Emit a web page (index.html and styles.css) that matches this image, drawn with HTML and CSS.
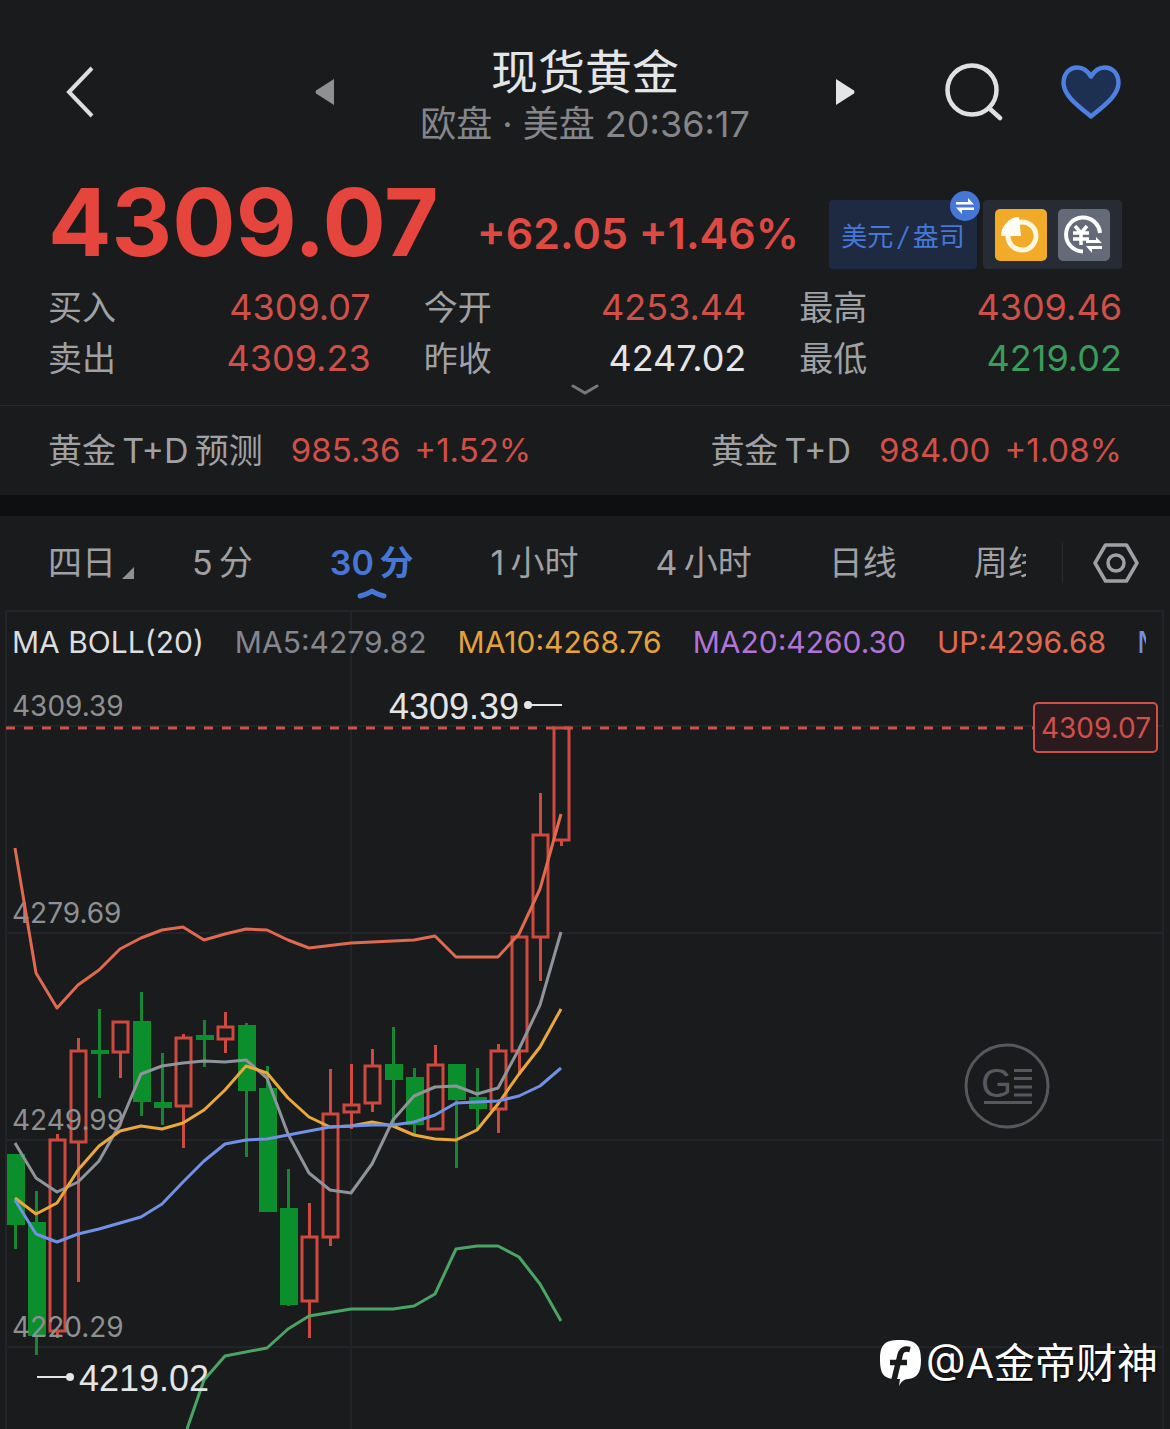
FILE: index.html
```html
<!DOCTYPE html>
<html lang="zh-CN">
<head>
    <meta charset="UTF-8">
    <meta name="viewport" content="width=device-width, initial-scale=1.0">
    <title>现货黄金</title>
    <link rel="stylesheet" href="styles.css">
</head>
<body>
    <header class="header">
        <button class="icon-btn" type="button" aria-label="返回">
            <svg width="28" height="52" viewBox="0 0 28 52"><path d="M26 2 3 26l23 24" fill="none" stroke="#dcdddf" stroke-width="4"/></svg>
        </button>
        <div class="switcher">
            <button class="icon-btn" type="button" aria-label="上一个">
                <svg width="20" height="28" viewBox="0 0 20 28"><path d="M19 1v26L1 15.500Q0 14 1 12.500Z" fill="#8f9092"/></svg>
            </button>
            <div class="title">
                <h1>现货黄金</h1>
                <p>欧盘 · 美盘 20:36:17</p>
            </div>
            <button class="icon-btn" type="button" aria-label="下一个">
                <svg width="20" height="28" viewBox="0 0 20 28"><path d="M1 1v26L19 15.500Q20 14 19 12.500Z" fill="#e4e5e7"/></svg>
            </button>
        </div>
        <div class="header-actions">
            <button class="icon-btn" type="button" aria-label="搜索">
                <svg width="58" height="58" viewBox="0 0 58 58" fill="none" stroke="#dfe0e2" stroke-width="4.500"><circle cx="27" cy="27" r="24.500"/><path d="m44 45 11 10" stroke-linecap="round"/></svg>
            </button>
            <button class="icon-btn" type="button" aria-label="自选">
                <svg width="60" height="54" viewBox="0 0 60 54"><path d="M30 11.500C25.500 4 20.500 2.500 16.500 2.500 8 2.500 2.500 9 2.500 18c0 12 13.500 22 27.500 33.500C44 40 57.500 30 57.500 18c0-9-5.500-15.500-14-15.500-4 0-9 1.500-13.500 9Z" fill="#1e3052" stroke="#4d80e0" stroke-width="4.500" stroke-linejoin="round"/></svg>
            </button>
        </div>
    </header>

    <section class="quote">
        <div class="price-row">
            <strong class="price">4309.07</strong>
            <span class="change">+62.05 +1.46%</span>
            <button class="unit" type="button">美元<i>/</i>盎司
                <svg class="unit-badge" width="30" height="30" viewBox="0 0 30 30"><circle cx="15" cy="15" r="15" fill="#4677d6"/><path d="M6 11h12V7l6 6.500H6zM24 19H12v4l-6-6.500h18z" fill="#fff"/></svg>
            </button>
            <div class="tools">
                <button class="icon-btn" type="button" aria-label="分析">
                    <svg width="52" height="52" viewBox="0 0 52 52"><rect width="52" height="52" rx="5" fill="#f1ab28"/><circle cx="27" cy="27" r="14" fill="none" stroke="#fff8de" stroke-width="5"/><path d="M26 27H6A19 19 0 0 1 24 8Z" fill="#fffdf5"/></svg>
                </button>
                <button class="icon-btn" type="button" aria-label="换算">
                    <svg width="52" height="52" viewBox="0 0 52 52"><rect width="52" height="52" rx="5" fill="#656a78"/><g fill="none" stroke="#fff"><path d="M25 42.500A17 17 0 1 1 42 24" stroke-width="4"/><path d="m17 17 6 7 6-7M23 24v12M15 24h16M15 30h16" stroke-width="3.500"/></g><path d="M28 34h16l-6-6v3H28zM44 37H28l6 7v-4h10z" fill="#fff"/></svg>
                </button>
            </div>
        </div>

        <dl class="stats">
            <div><dt>买入</dt><dd class="up">4309.07</dd></div>
            <div><dt>今开</dt><dd class="up">4253.44</dd></div>
            <div><dt>最高</dt><dd class="up">4309.46</dd></div>
            <div><dt>卖出</dt><dd class="up">4309.23</dd></div>
            <div><dt>昨收</dt><dd>4247.02</dd></div>
            <div><dt>最低</dt><dd class="down">4219.02</dd></div>
        </dl>
        <button class="icon-btn more" type="button" aria-label="展开">
            <svg width="28" height="12" viewBox="0 0 28 12"><path d="m2 2 12 7 12-7" fill="none" stroke="#77787b" stroke-width="3" stroke-linecap="round"/></svg>
        </button>
    </section>

    <section class="related">
        <a href="#td-forecast"><span>黄金&thinsp;T+D&thinsp;预测</span><b>985.36</b><b>+1.52%</b></a>
        <a href="#td"><span>黄金&thinsp;T+D</span><b>984.00</b><b>+1.08%</b></a>
    </section>

    <div class="toolbar">
        <nav class="tabs">
            <a href="#d4" class="tab-menu">四日<svg width="12" height="12" viewBox="0 0 12 12"><path d="M12 0v12H0z" fill="#8f9092"/></svg></a>
            <a href="#m5">5&thinsp;分</a>
            <a href="#m30" class="active">30&thinsp;分
                <svg class="tab-mark" width="30" height="11" viewBox="0 0 30 11"><path d="M3 8q8-2 12-5 4 3 12 5" fill="none" stroke="#4677d6" stroke-width="5" stroke-linecap="round" stroke-linejoin="round"/></svg>
            </a>
            <a href="#h1">1&thinsp;小时</a>
            <a href="#h4">4&thinsp;小时</a>
            <a href="#day">日线</a>
            <a href="#week">周线</a>
        </nav>
        <button class="icon-btn settings" type="button" aria-label="设置">
            <svg width="46" height="40" viewBox="0 0 46 40" fill="none" stroke="#a0a1a4" stroke-width="3.500"><path d="M12.500 2h21L44 20 33.500 38h-21L2 20Z" stroke-linejoin="round"/><circle cx="23" cy="20" r="8"/></svg>
        </button>
    </div>

    <main class="chart">
        <div class="legend">
            <span class="c-main">MA BOLL(20)</span>
            <span class="c-ma5">MA5:4279.82</span>
            <span class="c-ma10">MA10:4268.76</span>
            <span class="c-ma20">MA20:4260.30</span>
            <span class="c-up">UP:4296.68</span>
            <span class="c-mid">MID:4260.30</span>
        </div>
        <svg class="plot" viewBox="0 610 1170 819" role="img" aria-label="30 分 K 线图">
            <path class="grid" d="M6 611H1163M6 726H1163M6 933H1163M6 1140H1163M6 1347H1163M6 611V1429M351 611V1429M1163 611V1429"/>

            <!-- falling candles -->
            <g class="fall">
                <path d="M15.500 1154V1249M36.500 1191V1355M99.500 1009V1098M141.500 992V1116M162.500 1053V1125M204.500 1020V1067M246.500 1023V1157M267.500 1066V1212M288.500 1169V1306M393.500 1027V1125M414.500 1068V1135M456.500 1064V1168M477.500 1068V1129"/>
                <rect x="7" y="1154" width="18" height="71"/>
                <rect x="28" y="1222" width="18" height="114"/>
                <rect x="91" y="1050" width="18" height="4"/>
                <rect x="133" y="1021" width="18" height="81"/>
                <rect x="154" y="1102" width="18" height="6"/>
                <rect x="196" y="1035" width="18" height="5"/>
                <rect x="238" y="1025" width="18" height="66"/>
                <rect x="259" y="1088" width="18" height="124"/>
                <rect x="280" y="1208" width="18" height="97"/>
                <rect x="385" y="1064" width="18" height="16"/>
                <rect x="406" y="1077" width="18" height="48"/>
                <rect x="448" y="1064" width="18" height="36"/>
                <rect x="469" y="1097" width="18" height="12"/>
            </g>

            <!-- rising candles -->
            <g class="rise">
                <path d="M57.500 1134V1140M57.500 1332V1338M78.500 1038V1050M78.500 1143V1282M120.500 1052V1078M183.500 1034V1037M183.500 1106V1148M225.500 1012V1026M225.500 1039V1053M309.500 1203V1236M309.500 1301V1338M330.500 1069V1113M330.500 1237V1246M351.500 1064V1104M351.500 1112V1129M372.500 1049V1065M372.500 1104V1112M435.500 1045V1065M498.500 1044V1050M498.500 1109V1133M519.500 1051V1075M540.500 793V834M540.500 937V981M561.500 840V846"/>
                <rect x="50" y="1140" width="15" height="191"/>
                <rect x="71" y="1051" width="15" height="91"/>
                <rect x="113" y="1022" width="15" height="30"/>
                <rect x="176" y="1038" width="15" height="68"/>
                <rect x="218" y="1027" width="15" height="12"/>
                <rect x="302" y="1237" width="15" height="64"/>
                <rect x="323" y="1114" width="15" height="123"/>
                <rect x="344" y="1105" width="15" height="7"/>
                <rect x="365" y="1066" width="15" height="37"/>
                <rect x="428" y="1065" width="15" height="64"/>
                <rect x="491" y="1051" width="15" height="58"/>
                <rect x="512" y="937" width="15" height="114"/>
                <rect x="533" y="835" width="15" height="102"/>
                <rect x="554" y="728" width="15" height="112"/>
            </g>

            <!-- price scale -->
            <g class="scale">
                <text x="12" y="716">4309.39</text>
                <text x="12" y="923">4279.69</text>
                <text x="12" y="1130">4249.99</text>
                <text x="12" y="1337">4220.29</text>
            </g>

            <!-- moving averages and bands -->
            <g class="lines">
                <polyline stroke="#8f949b" points="15,1143 36,1178 57,1192 78,1182 99,1161 120,1124 141,1074 162,1066 183,1063 204,1061 225,1062 246,1060 267,1078 288,1134 309,1173 330,1190 351,1193 372,1164 393,1120 414,1096 435,1087 456,1086 477,1094 498,1088 519,1049 540,1005 561,932"/>
                <polyline stroke="#eaa83a" points="15,1198 36,1214 57,1203 78,1170 99,1146 120,1131 141,1126 162,1129 183,1123 204,1110 225,1090 246,1066 267,1073 288,1098 309,1117 330,1127 351,1126 372,1122 393,1126 414,1135 435,1139 456,1140 477,1130 498,1104 519,1074 540,1047 561,1009"/>
                <polyline stroke="#7191e6" points="15,1200 36,1234 57,1242 78,1234 99,1229 120,1223 141,1217 162,1204 183,1182 204,1161 225,1144 246,1140 267,1139 288,1135 309,1131 330,1127 351,1126 372,1125 393,1125 414,1122 435,1115 456,1103 477,1102 498,1101 519,1096 540,1086 561,1068"/>
                <polyline stroke="#e06a50" points="15,848 36,973 57,1008 78,985 99,970 120,949 141,938 162,930 183,927 204,940 225,934 246,929 267,930 288,940 309,948 351,943 372,942 414,940 435,936 456,957 498,957 519,934 540,889 561,814"/>
                <polyline stroke="#4aa564" points="187,1429 204,1380 225,1356 267,1348 288,1329 309,1316 351,1309 393,1309 414,1306 435,1294 456,1249 477,1246 498,1246 519,1257 540,1284 561,1321"/>
            </g>

            <!-- last price -->
            <path class="last-line" d="M6 728H1033"/>
            <rect class="last-box" x="1034" y="703" width="123" height="49" rx="4"/>
            <text class="last-text" x="1096" y="738" text-anchor="middle">4309.07</text>

            <!-- high and low marks -->
            <g class="marks">
                <path d="M528 705H562M37 1377H70"/>
                <circle cx="528" cy="705" r="4"/>
                <circle cx="70" cy="1377" r="4"/>
                <text x="389" y="719">4309.39</text>
                <text x="79" y="1391">4219.02</text>
            </g>

            <g class="news-mark">
                <circle cx="1007" cy="1086" r="41"/>
                <path d="M1014 1070.500H1032M1014 1078.500H1032M1014 1087H1032M1014 1095H1032M984 1102.500H1032"/>
                <text x="981" y="1097">G</text>
            </g>
        </svg>

        <div class="watermark">
            <svg width="41" height="47" viewBox="0 0 41 47"><path d="M20 0C36 0 41 5 41 20c0 13-4 18-13 19-4 0-7 3-9 7l1-7h-7C4 38 0 34 0 20 0 5 4 0 20 0Z" fill="#fff"/><path d="M30 9.500c-6-1.500-9 1-10 6L14 40M10 22.500h17" fill="none" stroke="#1a1b1d" stroke-width="5.500"/></svg>
            <span>@A金帝财神</span>
        </div>
    </main>
</body>
</html>
```

FILE: styles.css
```css
* {
    box-sizing: border-box;
}
body {
    margin: 0;
    background-color: #1a1b1d;
    color: #e4e5e7;
    font-family: Inter, "Noto Sans CJK SC", sans-serif;
    font-size: 34px;
    overflow-x: hidden;
}
h1, p, dl, dd {
    margin: 0;
}
a {
    color: inherit;
    text-decoration: none;
}
svg {
    display: block;
}
button {
    font: inherit;
    color: inherit;
    border: none;
    cursor: pointer;
}
.icon-btn {
    background: none;
    padding: 0;
}

.header {
    display: flex;
    align-items: center;
    padding: 44px 49px 0 66px;
}
.header .icon-btn {
    margin-bottom: 9px;
}
.switcher {
    flex: 1;
    display: flex;
    align-items: center;
    justify-content: space-between;
    margin: 0 90px 0 221px;
}
.title {
    text-align: center;
    white-space: nowrap;
}
.title h1 {
    font-size: 47px;
    line-height: 56px;
    font-weight: 400;
}
.title p {
    font-size: 36px;
    line-height: 48px;
    color: #85868a;
}
.header-actions {
    display: flex;
    align-items: center;
    gap: 58px;
}

.quote {
    padding: 27px 48px 0;
}
.price-row {
    display: flex;
    align-items: flex-end;
}
.price {
    font-size: 94px;
    line-height: 94px;
    font-weight: 700;
    color: #e6453e;
}
.change {
    margin-left: 38px;
    font-size: 43px;
    line-height: 72px;
    font-weight: 600;
    color: #de4a42;
    white-space: nowrap;
}
.unit {
    position: relative;
    margin-left: auto;
    width: 148px;
    height: 69px;
    padding: 0;
    border-radius: 4px;
    background-color: #1e2a42;
    color: #4677d6;
    font-size: 26px;
    white-space: nowrap;
}
.unit i {
    padding: 0 5px;
}
.unit-badge {
    position: absolute;
    top: -9px;
    right: -3px;
}
.tools {
    display: flex;
    gap: 11px;
    align-items: center;
    height: 69px;
    margin-left: 6px;
    padding: 0 12px;
    border-radius: 4px;
    background-color: #272b33;
}

.stats {
    display: grid;
    grid-template-columns: repeat(3, 1fr);
    column-gap: 53px;
    margin-top: 13px;
    line-height: 51px;
}
.stats div {
    display: flex;
    justify-content: space-between;
}
.stats dt {
    color: #a0a1a4;
}
.stats dd {
    font-size: 36px;
}
.up {
    color: #cf5048;
}
.down {
    color: #3a9c5a;
}
.more {
    display: block;
    margin: 0 auto;
    padding-bottom: 9px;
}

.related {
    display: flex;
    justify-content: space-between;
    padding: 0 48px;
    border-top: 1px solid #2a2b2e;
    border-bottom: 21px solid #0e0f11;
    line-height: 89px;
    white-space: nowrap;
    color: #a0a1a4;
}
.related a {
    display: flex;
    gap: 14px;
}
.related span {
    margin-right: 14px;
}
.related b {
    font-size: 33px;
    font-weight: 400;
    color: #cf5048;
}

.toolbar {
    display: flex;
    align-items: center;
    padding: 0 31px 0 48px;
    height: 94px;
    color: #a0a1a4;
}
.tabs {
    flex: 1;
    display: flex;
    gap: 39px;
    overflow: hidden;
    line-height: 94px;
    white-space: nowrap;
}
.tabs a {
    position: relative;
    padding: 0 19px;
}
.tabs .tab-menu {
    display: flex;
    align-items: center;
    gap: 6px;
    padding: 0;
}
.tab-menu svg {
    margin-top: 20px;
}
.tabs .active {
    color: #4677d6;
    font-weight: 600;
}
.tab-mark {
    position: absolute;
    left: 50%;
    bottom: 11px;
    margin-left: -15px;
}
.settings {
    margin-left: 36px;
    padding-left: 30px;
    border-left: 1px solid #2a2c31;
}

.chart {
    position: relative;
}
.plot {
    width: 100%;
    height: auto;
}
.legend {
    position: absolute;
    top: 0;
    left: 12px;
    right: 24px;
    display: flex;
    gap: 31px;
    overflow: hidden;
    font-size: 30px;
    line-height: 64px;
    white-space: nowrap;
}
.c-main { color: #dcdddf; }
.c-ma5 { color: #85878f; }
.c-ma10 { color: #e5a33c; }
.c-ma20 { color: #b074d6; }
.c-up { color: #e06a50; }
.c-mid { color: #7191e6; }

.grid {
    fill: none;
    stroke: #222429;
    stroke-width: 2;
}
.scale {
    fill: #8f9092;
    font-size: 28px;
}
.fall {
    fill: #0a8f2c;
    stroke: none;
}
.fall path {
    stroke: #188534;
    stroke-width: 3;
}
.rise {
    fill: none;
    stroke: #cf4a3e;
    stroke-width: 3;
}
.lines {
    fill: none;
    stroke-width: 3;
    stroke-linejoin: round;
}
.last-line {
    stroke: #cf5048;
    stroke-width: 3;
    stroke-dasharray: 9 9;
}
.last-box {
    fill: #2c1b1e;
    stroke: #cf5048;
    stroke-width: 2;
}
.last-text {
    fill: #cf5048;
    font-size: 28px;
}
.marks {
    fill: #e4e5e7;
    font-family: "Liberation Sans", Arial, sans-serif;
    font-size: 36px;
}
.marks path {
    stroke: #e4e5e7;
    stroke-width: 2;
}
.news-mark {
    fill: none;
    stroke: #57585d;
    stroke-width: 3;
}
.news-mark text {
    fill: #57585d;
    stroke: none;
    font-family: "Liberation Sans", Arial, sans-serif;
    font-size: 40px;
}

.watermark {
    position: absolute;
    right: 12px;
    bottom: 38px;
    display: flex;
    align-items: center;
    gap: 5px;
    color: #fff;
    font-size: 41px;
    line-height: 56px;
    text-shadow: 1px 1px 2px #000;
}
```
